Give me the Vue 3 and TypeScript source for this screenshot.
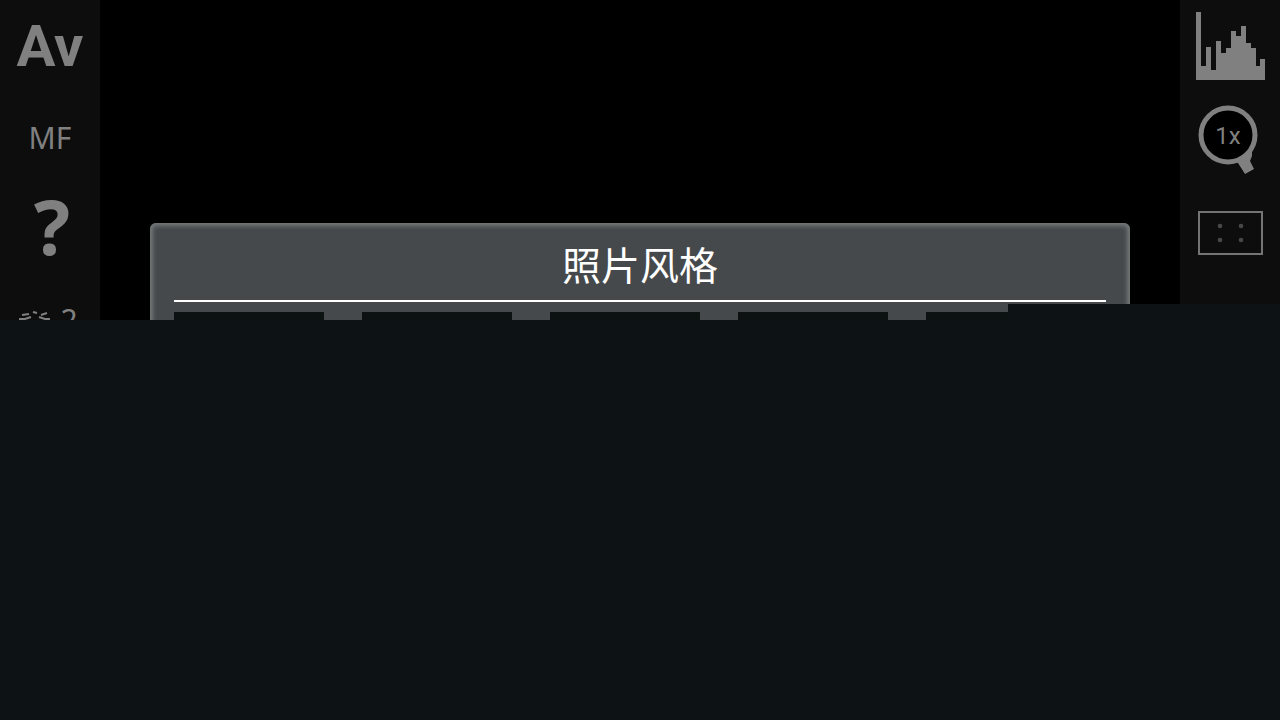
<script setup lang="ts">
const title = '照片风格'
const styles: number[] = [1, 2, 3, 4, 5]
</script>

<template>
  <main class="screen">
    <section class="camera">
      <nav class="rail" aria-label="Shooting settings">
        <button class="tool mode" type="button">Av</button>
        <button class="tool focus" type="button">MF</button>
        <button class="tool help" type="button">?</button>
        <button class="tool effect" type="button" aria-label="Picture effect">
          <svg width="34" height="26" viewBox="0 0 34 26" fill="none" stroke="currentColor" stroke-width="2">
            <path d="M4 8l7-1M15 5l4 1M23 8l6-2M1 12h6l6-2M21 10l6 2h5M6 17h22v8H6z" />
          </svg>
          <span>2</span>
        </button>
      </nav>

      <div class="view">
        <section class="dialog" role="dialog" aria-labelledby="dialog-title">
          <h1 id="dialog-title">{{ title }}</h1>
          <div class="tiles">
            <button v-for="style in styles" :key="style" class="tile" type="button" :aria-label="`${title} ${style}`"></button>
          </div>
        </section>
      </div>

      <nav class="rail" aria-label="Display settings">
        <button class="tool" type="button" aria-label="Histogram">
          <svg class="histogram" width="70" height="70" viewBox="0 0 70 70" fill="currentColor">
            <path d="M1 1h5v54h5V36h5v23h5V30h5v12h5v-5h5V20h5v5h5V15h5v17h5v5h5v18h4v-7h5v21H1z" />
          </svg>
        </button>
        <button class="tool" type="button" aria-label="Magnify 1x">
          <svg class="lens" width="64" height="72" viewBox="0 0 64 72">
            <path d="M33 59l11-7 7-7 3 3v6l-2 5 4 8-9 5-7-11-6-1z" fill="currentColor" />
            <circle cx="30" cy="33" r="27" fill="#000" stroke="currentColor" stroke-width="5" />
            <text x="30" y="42" text-anchor="middle" fill="currentColor">1x</text>
          </svg>
        </button>
        <button class="tool" type="button" aria-label="Focus frame">
          <svg class="frame" width="66" height="52" viewBox="0 0 66 52" fill="none">
            <path d="M2 8h63v42H2z" stroke="#747474" stroke-width="2" />
            <g fill="#484848">
              <circle cx="23" cy="22" r="2.3" />
              <circle cx="44" cy="22" r="2.3" />
              <circle cx="23" cy="36" r="2.3" />
              <circle cx="44" cy="36" r="2.3" />
            </g>
          </svg>
        </button>
      </nav>
      <div class="cover"></div>
    </section>
  </main>
</template>

<style>
body {
  margin: 0;
  background: #0d1214;
}
</style>

<style scoped>
.screen {
  min-height: 100vh;
  background: #0d1214;
}
.camera {
  position: relative;
  display: grid;
  grid-template-columns: 100px 1fr 100px;
  height: 320px;
  overflow: hidden;
  background: #000;
  font-family: "Noto Sans", "Noto Sans CJK SC", sans-serif;
}
.rail {
  display: flex;
  flex-direction: column;
  background: #0d0d0d;
}
.tool {
  display: flex;
  flex: none;
  align-items: center;
  justify-content: center;
  height: 92px;
  padding: 0;
  border: 0;
  background: none;
  color: #808080;
  font-family: inherit;
  line-height: 1;
}
.mode {
  font-family: Roboto, sans-serif;
  font-size: 58px;
  font-weight: 700;
}
.focus {
  font-size: 30px;
}
.help {
  padding: 0 0 8px;
  font-size: 76px;
  font-weight: 700;
}
.effect {
  gap: 8px;
  padding: 0 4px 4px 0;
  font-size: 30px;
}
.help {
  padding-left: 4px;
}
.lens text {
  font-family: Roboto, sans-serif;
  font-size: 24px;
}
.view {
  padding: 223px 50px 0;
}
.dialog {
  box-sizing: border-box;
  height: 400px;
  padding: 0 24px;
  border-radius: 6px;
  background: #45494c;
  box-shadow: inset 0 0 4px 3px #747878;
}
h1 {
  margin: 0;
  padding: 11px 0 8px;
  border-bottom: 2px solid #fff;
  color: #fff;
  font-family: "Noto Sans CJK SC", sans-serif;
  font-size: 39px;
  font-weight: 400;
  line-height: 58px;
  text-align: center;
}
.tiles {
  display: flex;
  gap: 38px;
  padding-top: 10px;
}
.tile {
  width: 150px;
  height: 150px;
  padding: 0;
  border: 0;
  background: #0c1112;
}
.cover {
  position: absolute;
  right: 0;
  bottom: 0;
  width: 272px;
  height: 16px;
  background: #0d1214;
}
</style>
